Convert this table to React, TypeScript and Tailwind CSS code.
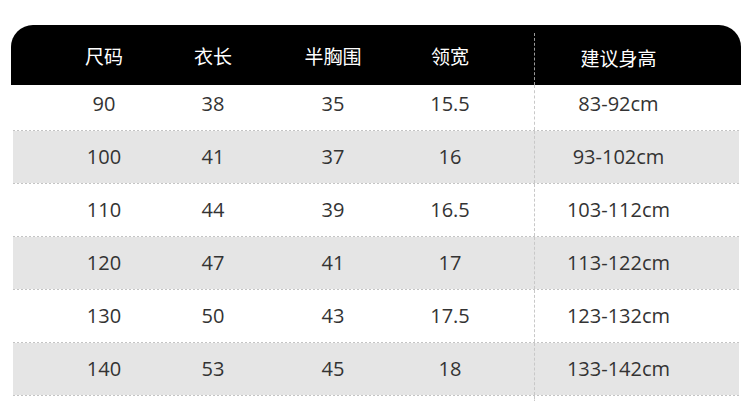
import React from 'react';

const rows = [
    ['90', '38', '35', '15.5', '83-92cm'],
    ['100', '41', '37', '16', '93-102cm'],
    ['110', '44', '39', '16.5', '103-112cm'],
    ['120', '47', '41', '17', '113-122cm'],
    ['130', '50', '43', '17.5', '123-132cm'],
    ['140', '53', '45', '18', '133-142cm'],
];

const headers = ['尺码', '衣长', '半胸围', '领宽', '建议身高'];

// dotted rule used above/below the grey rows
const Dots = () => (
    <div className="h-px mx-[2px] bg-[repeating-linear-gradient(90deg,#c4c4c4_0_2px,transparent_2px_4px)]" />
);

const Row = ({ cells, shaded, first }: { cells: string[]; shaded: boolean; first: boolean }) => (
    <div className={`flex text-[20px] text-[#333] mx-[2px] ${first ? 'h-[45px]' : 'h-[52px]'} ${shaded ? 'bg-[#e5e5e5]' : ''}`}>
        <div className="pl-[36px] flex">
            <div className={`w-[110px] flex items-center justify-center ${first ? 'pb-2' : ''}`}>{cells[0]}</div>
            <div className={`w-[108px] flex items-center justify-center ${first ? 'pb-2' : ''}`}>{cells[1]}</div>
            <div className={`w-[132px] flex items-center justify-center ${first ? 'pb-2' : ''}`}>{cells[2]}</div>
            <div className={`w-[135px] pr-[33px] flex items-center justify-center ${first ? 'pb-2' : ''}`}>{cells[3]}</div>
        </div>
        <div className={`flex-1 border-l border-dashed border-[#c8c8c8] pr-[37px] flex items-center justify-center ${first ? 'pb-2' : ''}`}>
            {cells[4]}
        </div>
    </div>
);

export default function App() {
    return (
        <div className="w-[752px] h-[401px] bg-white overflow-hidden" style={{ fontFamily: '"Open Sans", "Noto Sans CJK SC", sans-serif' }}>
            <div className="pt-[25px] px-[11px]">
                {/* Header */}
                <div className="h-[60px] bg-black rounded-t-[22px] flex text-white text-[19px]">
                    <div className="pl-[38px] flex">
                        {headers.slice(0, 4).map((h, i) => (
                            <div
                                key={h}
                                className={`flex items-center justify-center pt-1 ${['w-[110px]', 'w-[108px]', 'w-[132px]', 'w-[135px] pr-[33px]'][i]}`}
                            >
                                {h}
                            </div>
                        ))}
                    </div>
                    <div className="flex-1 flex flex-col">
                        <div className="flex-1 mt-[8px] border-l border-dashed border-[#9a9a9a] pr-[39px] flex items-center justify-center">
                            {headers[4]}
                        </div>
                    </div>
                </div>

                {/* Body */}
                {rows.map((r, i) => (
                    <React.Fragment key={r[0]}>
                        {i % 2 === 1 && <Dots />}
                        <Row cells={r} shaded={i % 2 === 1} first={i === 0} />
                        {i % 2 === 1 && <Dots />}
                    </React.Fragment>
                ))}
                <div className="flex h-[10px] mx-[2px]">
                    <div className="w-[521px]" />
                    <div className="flex-1 border-l border-dashed border-[#c8c8c8]" />
                </div>
            </div>
        </div>
    );
}
